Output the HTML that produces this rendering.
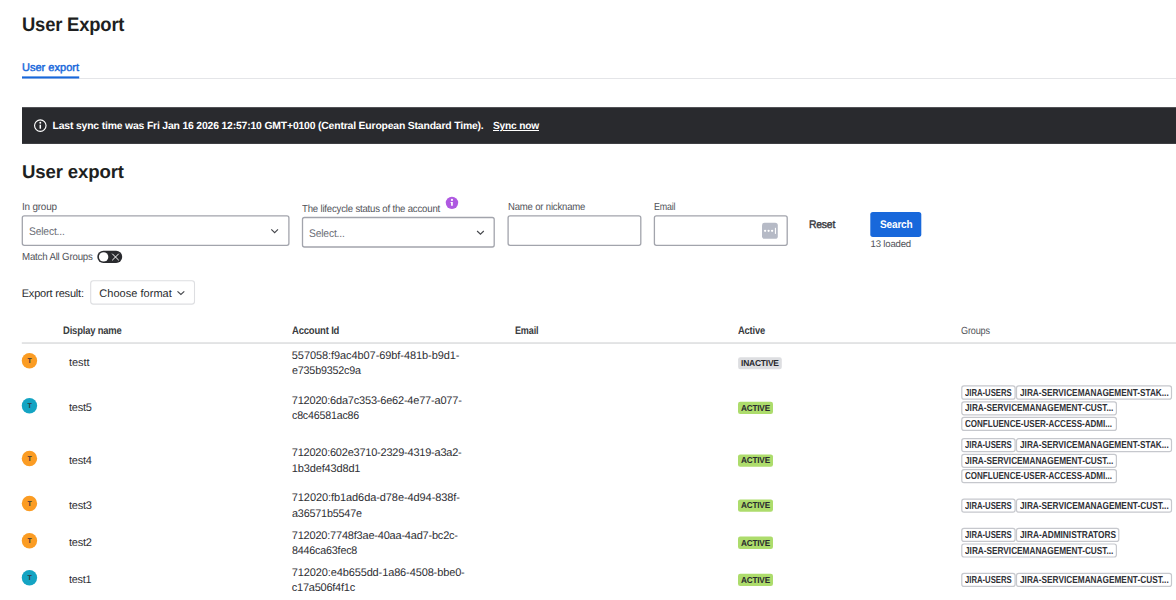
<!DOCTYPE html>
<html lang="en">
<head>
<meta charset="utf-8">
<meta name="viewport" content="width=1176">
<title>User Export</title>
<style>
*{box-sizing:border-box;margin:0;padding:0}
html,body{width:1176px;height:600px;overflow:hidden;background:#fff}
body{font-family:"Liberation Sans",sans-serif;color:#292a2e;font-size:11px;position:relative;text-rendering:geometricPrecision}
.art{position:absolute;left:0;top:0}
.t{position:absolute;display:block;white-space:pre;transform-origin:0 50%;font-weight:400;font-style:normal;text-decoration:none;border:0;background:none;font-family:inherit;text-align:left;cursor:default;text-rendering:geometricPrecision;-webkit-appearance:none;appearance:none;outline:0}
h1.t{font-size:19.5px;line-height:22px;font-weight:700;color:#1e1f21}
h2.t{font-size:18.6px;line-height:22px;font-weight:700;color:#1e1f21}
.tab{font-size:11px;line-height:13px;color:#1868db;-webkit-text-stroke:0.45px #1868db}
.msg{font-size:10.4px;line-height:13px;font-weight:700;color:#fff}
a.msg{text-decoration:underline}
.lbl{font-size:10.3px;line-height:13px;color:#505258}
.sm{font-size:9.6px;line-height:13px;color:#505258}
.ph{font-size:11px;line-height:13px;color:#6b6e76}
.reset{font-size:11px;line-height:13px;color:#34363b;-webkit-text-stroke:0.4px #34363b}
.search{font-size:11px;line-height:13px;font-weight:700;color:#fff}
.exp{font-size:11px;line-height:13px;color:#292a2e}
.hd{font-size:10.8px;line-height:13px;font-weight:700;color:#393b40}
.hd2{font-size:10.3px;line-height:13px;color:#505258}
.ini{font-size:7px;line-height:7px;font-weight:700;color:#33353a}
.nm{font-size:11px;line-height:13px;color:#2f3035}
.id{font-size:11px;line-height:15.4px;color:#2f3035}
.loz{font-size:8.6px;line-height:13.9px;font-weight:700;color:#292a2e}
.tg{font-size:10.2px;line-height:14.2px;font-weight:700;color:#303136}
.tg1{font-size:10.2px;line-height:14.6px;font-weight:700;color:#303136}
</style>
</head>
<body>
<svg class="art" width="1176" height="600" viewBox="0 0 1176 600" aria-hidden="true">
<rect x="22" y="78" width="1154" height="1" fill="#e4e5e8"/>
<rect x="22" y="76.4" width="57.2" height="2.1" fill="#1868db"/>
<rect x="22" y="107.2" width="1154" height="36.7" fill="#292a2e"/>
<g transform="translate(33.8 119.1)"><circle cx="6.5" cy="6.5" r="5.75" fill="none" stroke="#fff" stroke-width="1.15"/><rect x="5.75" y="5.6" width="1.5" height="4" fill="#fff"/><circle cx="6.5" cy="3.7" r="0.95" fill="#fff"/></g>
<g fill="#fff" stroke="#a2a4ac" stroke-width="1.3">
<rect x="22.3" y="215.8" width="266.6" height="29.5" rx="2"/>
<rect x="302.5" y="217.5" width="191.7" height="29.5" rx="2"/>
<rect x="508.1" y="215.8" width="132.7" height="29.5" rx="2"/>
<rect x="654.4" y="215.8" width="132.8" height="29.5" rx="2"/>
</g>
<rect x="90.7" y="280.8" width="103.8" height="23.3" rx="2.6" fill="#fff" stroke="#dddee1" stroke-width="1.1"/>
<g fill="none" stroke="#46484d" stroke-width="1.15">
<path d="M271.3 229.4 L274.65 232.6 L278 229.4"/>
<path d="M477.1 231 L480.45 234.2 L483.8 231"/>
<path d="M177.5 291.3 L180.9 294.5 L184.3 291.3"/>
</g>
<circle cx="451.95" cy="202.85" r="6.2" fill="#af59e1"/><path d="M450.6 201.9h2.2v3.9h-1.7v-2.9h-0.5z" fill="#fff"/><circle cx="451.95" cy="199.9" r="1.05" fill="#fff"/>
<rect x="762" y="222.8" width="15.8" height="16" rx="2.6" fill="#b6bac6"/>
<g fill="#fff"><circle cx="765.1" cy="230.8" r="1.15"/><circle cx="768.6" cy="230.8" r="1.15"/><circle cx="772.1" cy="230.8" r="1.15"/><rect x="774.9" y="227.8" width="1.05" height="6.1"/></g>
<rect x="870.3" y="212" width="51" height="24.9" rx="2.6" fill="#1868db"/>
<rect x="97.3" y="250.8" width="24.9" height="12.2" rx="6.1" fill="#292a2e"/>
<circle cx="103.6" cy="256.9" r="4.7" fill="#fff"/>
<path d="M112.2 253.7 L118.8 260.3 M118.8 253.7 L112.2 260.3" stroke="#fff" stroke-width="1" fill="none"/>
<rect x="21.8" y="342.2" width="1155" height="1.7" fill="#dfe0e2"/>
<circle cx="29.45" cy="360.8" r="7.7" fill="#fb9c23"/>
<rect x="738.1" y="357.2" width="43.7" height="12" rx="2.2" fill="#dddee1"/>
<circle cx="29.45" cy="405.8" r="7.7" fill="#14a4c3"/>
<rect x="738" y="401.7" width="35" height="12.3" rx="2.2" fill="#addc6c"/>
<rect x="961.8" y="385.8" width="53.3" height="13.4" rx="2.2" fill="#fff" stroke="#c6c8cd" stroke-width="1.2"/>
<rect x="1016.5" y="385.8" width="155" height="13.4" rx="2.2" fill="#fff" stroke="#c6c8cd" stroke-width="1.2"/>
<rect x="961.8" y="401.8" width="154.6" height="13" rx="2.2" fill="#fff" stroke="#c6c8cd" stroke-width="1.2"/>
<rect x="961.8" y="417.4" width="154.6" height="13" rx="2.2" fill="#fff" stroke="#c6c8cd" stroke-width="1.2"/>
<circle cx="29.45" cy="458.5" r="7.7" fill="#fb9c23"/>
<rect x="738" y="454.4" width="35" height="12.3" rx="2.2" fill="#addc6c"/>
<rect x="961.8" y="438.7" width="53.3" height="13" rx="2.2" fill="#fff" stroke="#c6c8cd" stroke-width="1.2"/>
<rect x="1016.5" y="438.7" width="155" height="13" rx="2.2" fill="#fff" stroke="#c6c8cd" stroke-width="1.2"/>
<rect x="961.8" y="454.3" width="154.6" height="13" rx="2.2" fill="#fff" stroke="#c6c8cd" stroke-width="1.2"/>
<rect x="961.8" y="469.7" width="154.6" height="13" rx="2.2" fill="#fff" stroke="#c6c8cd" stroke-width="1.2"/>
<circle cx="29.45" cy="503.5" r="7.7" fill="#fb9c23"/>
<rect x="738" y="499.4" width="35" height="12.3" rx="2.2" fill="#addc6c"/>
<rect x="961.8" y="499.2" width="53.3" height="13" rx="2.2" fill="#fff" stroke="#c6c8cd" stroke-width="1.2"/>
<rect x="1016.5" y="499.2" width="155" height="13" rx="2.2" fill="#fff" stroke="#c6c8cd" stroke-width="1.2"/>
<circle cx="29.45" cy="540.7" r="7.7" fill="#fb9c23"/>
<rect x="738" y="536.6" width="35" height="12.3" rx="2.2" fill="#addc6c"/>
<rect x="961.8" y="528.4" width="53.3" height="13" rx="2.2" fill="#fff" stroke="#c6c8cd" stroke-width="1.2"/>
<rect x="1016.5" y="528.4" width="102.3" height="13" rx="2.2" fill="#fff" stroke="#c6c8cd" stroke-width="1.2"/>
<rect x="961.8" y="544" width="154.6" height="13" rx="2.2" fill="#fff" stroke="#c6c8cd" stroke-width="1.2"/>
<circle cx="29.45" cy="577.8" r="7.7" fill="#14a4c3"/>
<rect x="738" y="573.7" width="35" height="12.3" rx="2.2" fill="#addc6c"/>
<rect x="961.8" y="573.4" width="53.3" height="13" rx="2.2" fill="#fff" stroke="#c6c8cd" stroke-width="1.2"/>
<rect x="1016.5" y="573.4" width="155" height="13" rx="2.2" fill="#fff" stroke="#c6c8cd" stroke-width="1.2"/>
</svg>
<header>
<h1 class="t" style="left:22px;top:14px;letter-spacing:-0.200px;transform:scaleX(0.9443)">User Export</h1>
</header>
<nav aria-label="Tabs">
<a class="t tab" href="#user-export" aria-current="page" style="left:22px;top:61.7px;letter-spacing:0.014px">User export</a>
</nav>
<div role="status">
<span class="t msg" style="left:52.6px;top:120.3px;letter-spacing:-0.174px">Last sync time was Fri Jan 16 2026 12:57:10 GMT+0100 (Central European Standard Time).</span>
<a class="t msg" href="#sync" style="left:493.1px;top:120.3px;letter-spacing:-0.200px;transform:scaleX(0.9809)">Sync now</a>
</div>
<main id="user-export">
<h2 class="t" style="left:22px;top:161px;letter-spacing:-0.134px">User export</h2>
<form action="#" autocomplete="off">
<div class="field">
<label class="t lbl" style="left:21.6px;top:200.6px;letter-spacing:-0.200px;transform:scaleX(0.9616)">In group</label>
<span class="t ph" style="left:28.5px;top:225.9px;letter-spacing:-0.200px;transform:scaleX(0.9384)">Select...</span>
<label class="t lbl" style="left:21.6px;top:251.2px;letter-spacing:-0.200px;transform:scaleX(0.9402)">Match All Groups</label>
</div>
<div class="field">
<label class="t lbl" style="left:301.8px;top:203.2px;letter-spacing:-0.200px;transform:scaleX(0.9318)">The lifecycle status of the account</label>
<span class="t ph" style="left:308.5px;top:227.5px;letter-spacing:-0.200px;transform:scaleX(0.9384)">Select...</span>
</div>
<div class="field">
<label class="t lbl" style="left:507.6px;top:200.6px;letter-spacing:-0.200px;transform:scaleX(0.9278)">Name or nickname</label>
</div>
<div class="field">
<label class="t lbl" style="left:654px;top:200.6px;letter-spacing:-0.200px;transform:scaleX(0.8657)">Email</label>
</div>
<div class="actions">
<button class="t reset" type="reset" style="left:809.3px;top:219.3px;letter-spacing:-0.200px;transform:scaleX(0.9410)">Reset</button>
<button class="t search" type="submit" style="left:879.6px;top:219.4px;letter-spacing:-0.200px;transform:scaleX(0.9159)">Search</button>
<span class="t sm" style="left:870.6px;top:237.8px;letter-spacing:-0.195px">13 loaded</span>
</div>
</form>
<div class="export">
<span class="t exp" style="left:21.7px;top:288.3px;letter-spacing:-0.193px">Export result:</span>
<button class="t exp" type="button" style="left:99.3px;top:288.3px;letter-spacing:0.029px">Choose format</button>
</div>
<div role="table" aria-label="Users">
<div role="row">
<span class="t hd" role="columnheader" style="left:62.7px;top:324.8px;letter-spacing:-0.200px;transform:scaleX(0.8721)">Display name</span>
<span class="t hd" role="columnheader" style="left:291.6px;top:324.8px;letter-spacing:-0.200px;transform:scaleX(0.8778)">Account Id</span>
<span class="t hd" role="columnheader" style="left:515px;top:324.8px;letter-spacing:-0.200px;transform:scaleX(0.8389)">Email</span>
<span class="t hd" role="columnheader" style="left:738px;top:324.8px;letter-spacing:-0.200px;transform:scaleX(0.8656)">Active</span>
<span class="t hd2" role="columnheader" style="left:961px;top:324.8px;letter-spacing:-0.200px;transform:scaleX(0.8847)">Groups</span>
</div>
<div role="row">
<span class="t ini" aria-hidden="true" style="left:27.4px;top:358.1px;letter-spacing:-0.081px">T</span>
<span class="t nm" role="cell" style="left:69px;top:357.2px;letter-spacing:-0.074px">testt</span>
<div role="cell">
<span class="t id" style="left:291.8px;top:348.6px;letter-spacing:-0.078px">557058:f9ac4b07-69bf-481b-b9d1-</span>
<span class="t id" style="left:291.8px;top:364px;letter-spacing:-0.200px;transform:scaleX(0.9774)">e735b9352c9a</span>
</div>
<span class="t loz" role="cell" style="left:741px;top:357.2px;letter-spacing:-0.200px;transform:scaleX(0.9817)">INACTIVE</span>
<div role="cell">
</div>
</div>
<div role="row">
<span class="t ini" aria-hidden="true" style="left:27.4px;top:403.1px;letter-spacing:-0.081px">T</span>
<span class="t nm" role="cell" style="left:69px;top:402.2px;letter-spacing:-0.215px">test5</span>
<div role="cell">
<span class="t id" style="left:291.8px;top:393.6px;letter-spacing:-0.205px">712020:6da7c353-6e62-4e77-a077-</span>
<span class="t id" style="left:291.8px;top:409px;letter-spacing:-0.200px;transform:scaleX(0.9688)">c8c46581ac86</span>
</div>
<span class="t loz" role="cell" style="left:741px;top:401.7px;letter-spacing:-0.200px;transform:scaleX(0.9536)">ACTIVE</span>
<div role="cell">
<span class="t tg1" style="left:964.8px;top:386.9px;transform:scaleX(0.7552)">JIRA-USERS</span>
<span class="t tg1" style="left:1019.5px;top:386.9px;transform:scaleX(0.8100)">JIRA-SERVICEMANAGEMENT-STAK...</span>
<span class="t tg" style="left:964.8px;top:401.9px;transform:scaleX(0.8094)">JIRA-SERVICEMANAGEMENT-CUST...</span>
<span class="t tg" style="left:964.8px;top:417.5px;transform:scaleX(0.7889)">CONFLUENCE-USER-ACCESS-ADMI...</span>
</div>
</div>
<div role="row">
<span class="t ini" aria-hidden="true" style="left:27.4px;top:455.8px;letter-spacing:-0.081px">T</span>
<span class="t nm" role="cell" style="left:69px;top:454.9px;letter-spacing:-0.215px">test4</span>
<div role="cell">
<span class="t id" style="left:291.8px;top:446.3px;letter-spacing:-0.226px">712020:602e3710-2329-4319-a3a2-</span>
<span class="t id" style="left:291.8px;top:461.7px;letter-spacing:-0.151px">1b3def43d8d1</span>
</div>
<span class="t loz" role="cell" style="left:741px;top:454.4px;letter-spacing:-0.200px;transform:scaleX(0.9536)">ACTIVE</span>
<div role="cell">
<span class="t tg" style="left:964.8px;top:438.8px;transform:scaleX(0.7552)">JIRA-USERS</span>
<span class="t tg" style="left:1019.5px;top:438.8px;transform:scaleX(0.8100)">JIRA-SERVICEMANAGEMENT-STAK...</span>
<span class="t tg" style="left:964.8px;top:455.4px;transform:scaleX(0.8094)">JIRA-SERVICEMANAGEMENT-CUST...</span>
<span class="t tg" style="left:964.8px;top:469.8px;transform:scaleX(0.7889)">CONFLUENCE-USER-ACCESS-ADMI...</span>
</div>
</div>
<div role="row">
<span class="t ini" aria-hidden="true" style="left:27.4px;top:500.8px;letter-spacing:-0.081px">T</span>
<span class="t nm" role="cell" style="left:69px;top:499.9px;letter-spacing:-0.215px">test3</span>
<div role="cell">
<span class="t id" style="left:291.8px;top:491.3px;letter-spacing:-0.082px">712020:fb1ad6da-d78e-4d94-838f-</span>
<span class="t id" style="left:291.8px;top:506.7px;letter-spacing:-0.200px;transform:scaleX(0.9828)">a36571b5547e</span>
</div>
<span class="t loz" role="cell" style="left:741px;top:499.4px;letter-spacing:-0.200px;transform:scaleX(0.9536)">ACTIVE</span>
<div role="cell">
<span class="t tg" style="left:964.8px;top:500.3px;transform:scaleX(0.7552)">JIRA-USERS</span>
<span class="t tg" style="left:1019.5px;top:500.3px;transform:scaleX(0.8116)">JIRA-SERVICEMANAGEMENT-CUST...</span>
</div>
</div>
<div role="row">
<span class="t ini" aria-hidden="true" style="left:27.4px;top:538px;letter-spacing:-0.081px">T</span>
<span class="t nm" role="cell" style="left:69px;top:537.1px;letter-spacing:-0.215px">test2</span>
<div role="cell">
<span class="t id" style="left:291.8px;top:528.5px;letter-spacing:-0.209px">712020:7748f3ae-40aa-4ad7-bc2c-</span>
<span class="t id" style="left:291.8px;top:543.9px;letter-spacing:-0.200px;transform:scaleX(0.9757)">8446ca63fec8</span>
</div>
<span class="t loz" role="cell" style="left:741px;top:536.6px;letter-spacing:-0.200px;transform:scaleX(0.9536)">ACTIVE</span>
<div role="cell">
<span class="t tg" style="left:964.8px;top:528.5px;transform:scaleX(0.7552)">JIRA-USERS</span>
<span class="t tg" style="left:1019.5px;top:528.5px;transform:scaleX(0.8141)">JIRA-ADMINISTRATORS</span>
<span class="t tg" style="left:964.8px;top:545.1px;transform:scaleX(0.8094)">JIRA-SERVICEMANAGEMENT-CUST...</span>
</div>
</div>
<div role="row">
<span class="t ini" aria-hidden="true" style="left:27.4px;top:575.1px;letter-spacing:-0.081px">T</span>
<span class="t nm" role="cell" style="left:69px;top:574.2px;letter-spacing:-0.200px;transform:scaleX(0.9801)">test1</span>
<div role="cell">
<span class="t id" style="left:291.8px;top:565.6px;letter-spacing:-0.126px">712020:e4b655dd-1a86-4508-bbe0-</span>
<span class="t id" style="left:291.8px;top:581px;letter-spacing:-0.242px">c17a506f4f1c</span>
</div>
<span class="t loz" role="cell" style="left:741px;top:573.7px;letter-spacing:-0.200px;transform:scaleX(0.9536)">ACTIVE</span>
<div role="cell">
<span class="t tg" style="left:964.8px;top:573.5px;transform:scaleX(0.7552)">JIRA-USERS</span>
<span class="t tg" style="left:1019.5px;top:573.5px;transform:scaleX(0.8116)">JIRA-SERVICEMANAGEMENT-CUST...</span>
</div>
</div>
</div>
</main>
</body>
</html>
